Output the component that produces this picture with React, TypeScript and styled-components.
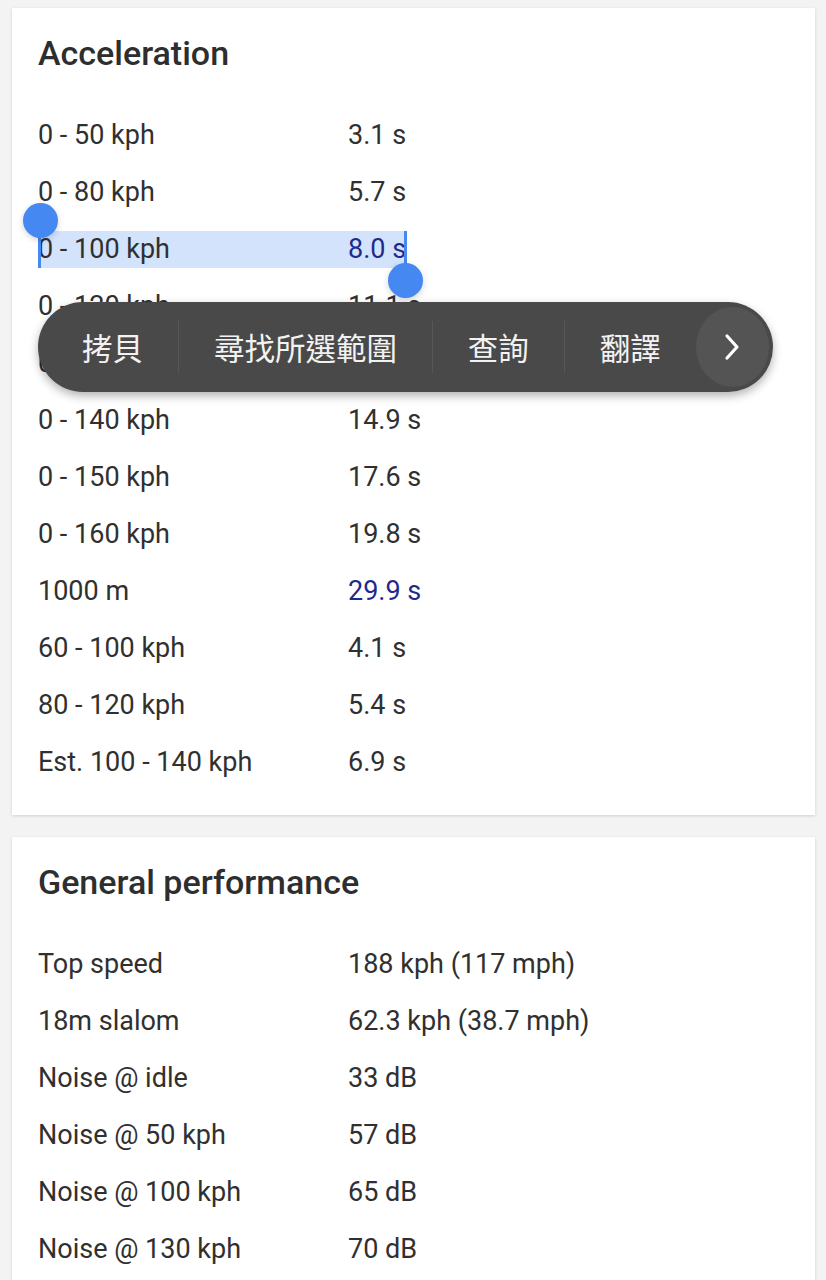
import styled, { createGlobalStyle } from 'styled-components';

const GlobalStyle = createGlobalStyle`
  html, body {
    margin: 0;
    padding: 0;
    background: #f3f3f3;
  }
  body {
    font-family: Roboto, "Noto Sans", "Liberation Sans", sans-serif;
    color: #303030;
  }
`;

const Page = styled.div`
  display: flex;
  flex-direction: column;
  gap: 22px;
  padding: 8px 11px 0 12px;
`;

const Card = styled.section`
  position: relative;
  background: #ffffff;
  box-shadow: 0 1px 3px rgba(0, 0, 0, 0.14);
  padding: 19px 26px 24px;
`;

const CardTitle = styled.h2`
  margin: 0 0 28px;
  font-size: 34px;
  line-height: 52px;
  font-weight: 500;
  color: #2e2e2e;
`;

const Row = styled.div`
  height: 57px;
  display: flex;
  align-items: center;
`;

const RowInner = styled.div<{ $selected?: boolean }>`
  position: relative;
  display: grid;
  grid-template-columns: 310px auto;
  font-size: 27px;
  line-height: 37px;
  background: ${(p) => (p.$selected ? '#d3e3fb' : 'transparent')};
`;

const Label = styled.span``;

const Value = styled.span<{ $link?: boolean }>`
  color: ${(p) => (p.$link ? '#1f2b8c' : 'inherit')};
`;

const Caret = styled.span<{ $side: 'left' | 'right' }>`
  position: absolute;
  top: 0;
  width: 3px;
  height: 37px;
  background: #4688f1;
  ${(p) => (p.$side === 'left' ? 'left: 0;' : 'right: -1px;')}
`;

const Handle = styled.span<{ $side: 'left' | 'right' }>`
  position: absolute;
  width: 35px;
  height: 35px;
  border-radius: 50%;
  background: #4688f1;
  box-shadow: 0 2px 6px rgba(0, 0, 0, 0.18);
  ${(p) =>
    p.$side === 'left' ? 'left: -15px; top: -28px;' : 'right: -17px; top: 32px;'}
`;

const Toolbar = styled.div`
  position: absolute;
  left: 26px;
  top: 294px;
  width: 735px;
  height: 90px;
  box-sizing: border-box;
  display: flex;
  align-items: center;
  padding-left: 9px;
  padding-right: 4px;
  background: #494949;
  border-radius: 45px;
  box-shadow: 0 4px 10px rgba(0, 0, 0, 0.3);
  font-family: "Noto Sans CJK TC", "Noto Sans CJK SC", sans-serif;
`;

const ToolItem = styled.span`
  padding: 0 35px;
  font-size: 30.5px;
  color: #f2f2f2;
  white-space: nowrap;
`;

const ToolDivider = styled.span`
  width: 1px;
  height: 52px;
  background: #575757;
`;

const MoreButton = styled.span`
  margin-left: auto;
  width: 80px;
  height: 80px;
  border-radius: 50%;
  background: #545454;
  display: flex;
  align-items: center;
  justify-content: center;
`;

type Item = { label: string; value: string; link?: boolean };

const acceleration: Item[] = [
  { label: '0 - 50 kph', value: '3.1 s' },
  { label: '0 - 80 kph', value: '5.7 s' },
  { label: '0 - 100 kph', value: '8.0 s', link: true },
  { label: '0 - 120 kph', value: '11.1 s' },
  { label: '0 - 130 kph', value: '12.9 s' },
  { label: '0 - 140 kph', value: '14.9 s' },
  { label: '0 - 150 kph', value: '17.6 s' },
  { label: '0 - 160 kph', value: '19.8 s' },
  { label: '1000 m', value: '29.9 s', link: true },
  { label: '60 - 100 kph', value: '4.1 s' },
  { label: '80 - 120 kph', value: '5.4 s' },
  { label: 'Est. 100 - 140 kph', value: '6.9 s' },
];

const general: Item[] = [
  { label: 'Top speed', value: '188 kph (117 mph)' },
  { label: '18m slalom', value: '62.3 kph (38.7 mph)' },
  { label: 'Noise @ idle', value: '33 dB' },
  { label: 'Noise @ 50 kph', value: '57 dB' },
  { label: 'Noise @ 100 kph', value: '65 dB' },
  { label: 'Noise @ 130 kph', value: '70 dB' },
];

const SELECTED_ROW = 2;

const menuItems = ['拷貝', '尋找所選範圍', '查詢', '翻譯'];

export default function App() {
  const renderRow = (item: Item, idx: number, selectable: boolean) => {
    const selected = selectable && idx === SELECTED_ROW;
    return (
      <Row key={item.label}>
        <RowInner $selected={selected}>
          <Label>{item.label}</Label>
          <Value $link={item.link}>{item.value}</Value>
          {selected && (
            <>
              <Caret $side="left" />
              <Caret $side="right" />
              <Handle $side="left" />
              <Handle $side="right" />
            </>
          )}
        </RowInner>
      </Row>
    );
  };

  return (
    <>
      <GlobalStyle />
      <Page>
        <Card>
          <CardTitle>Acceleration</CardTitle>
          {acceleration.map((item, idx) => renderRow(item, idx, true))}

          <Toolbar>
            {menuItems.map((label, idx) => (
              <span key={label} style={{ display: 'contents' }}>
                {idx > 0 && <ToolDivider />}
                <ToolItem>{label}</ToolItem>
              </span>
            ))}
            <MoreButton>
              <svg width="20" height="30" viewBox="0 0 20 30" aria-hidden="true">
                <path
                  d="M5 4 L15 15 L5 26"
                  fill="none"
                  stroke="#ffffff"
                  strokeWidth="3.2"
                  strokeLinecap="round"
                  strokeLinejoin="round"
                />
              </svg>
            </MoreButton>
          </Toolbar>
        </Card>

        <Card>
          <CardTitle>General performance</CardTitle>
          {general.map((item, idx) => renderRow(item, idx, false))}
        </Card>
      </Page>
    </>
  );
}
